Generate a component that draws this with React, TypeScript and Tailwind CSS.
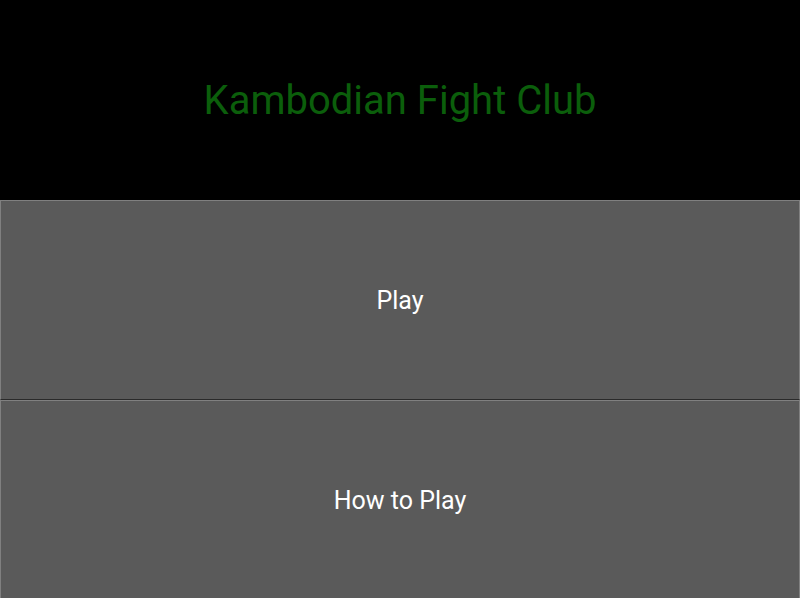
export default function App() {
  return (
    <div className="w-[800px] h-[598px] bg-black flex flex-col overflow-hidden" style={{ fontFamily: "Roboto, sans-serif" }}>
      <div className="h-[200px] shrink-0 flex items-center justify-center">
        <h1 className="text-[40px] text-[#0b5e0b] font-normal leading-none mt-[2px]">Kambodian Fight Club</h1>
      </div>
      <button className="h-[200px] shrink-0 bg-[#5a5a5a] border border-t-[#808080] border-l-[#808080] border-r-[#808080] border-b-[#2a2a2a] text-white text-[25px] flex items-center justify-center pt-[2px]">
        Play
      </button>
      <button className="h-[200px] shrink-0 bg-[#5a5a5a] border border-t-[#808080] border-l-[#808080] border-r-[#808080] border-b-[#2a2a2a] text-white text-[25px] flex items-center justify-center pt-[2px]">
        How to Play
      </button>
    </div>
  );
}
